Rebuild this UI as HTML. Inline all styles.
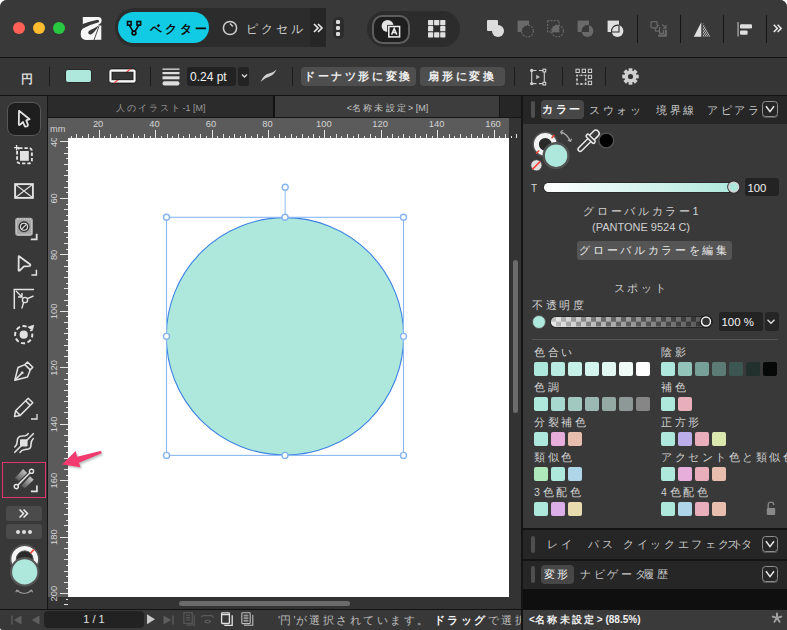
<!DOCTYPE html>
<html><head><meta charset="utf-8"><style>
html,body{margin:0;padding:0;background:#fff;}
body{width:787px;height:630px;overflow:hidden;position:relative;font-family:"Liberation Sans",sans-serif;}
#w{position:absolute;left:0;top:0;width:787px;height:630px;overflow:hidden;background:#383838;border-radius:7px 7px 0 3px;}
.t{position:absolute;white-space:nowrap;}
.j{letter-spacing:0.24em;}
svg{overflow:visible;}
</style></head><body><div id="w">
<div style="position:absolute;left:0px;top:0px;width:787px;height:57px;background:#393939"></div>
<div style="position:absolute;left:0px;top:57px;width:787px;height:1px;background:#141414"></div>
<div style="position:absolute;left:13px;top:22px;width:12px;height:12px;background:#fe5f57;border-radius:50%"></div>
<div style="position:absolute;left:33px;top:22px;width:12px;height:12px;background:#febc2e;border-radius:50%"></div>
<div style="position:absolute;left:53px;top:22px;width:12px;height:12px;background:#28c840;border-radius:50%"></div>
<svg style="position:absolute;left:76px;top:12px" width="30" height="32" viewBox="0 0 30 32">
<path fill="#f6f6f6" d="M6.8 5.1 L22 5.1 Q25.9 5.3 25.6 9 L25.3 12.5 L25.3 27.7 L10 28 Q4.8 27.5 4.7 22.3 Q4.7 18 7.2 16 L6.8 15.6 Z"/>
<path fill="#393939" d="M6.8 11.9 Q13 9.5 20.5 7.9 Q23.2 7.5 23.2 9.4 Q23 10.2 22 10.6 Q14 12.8 7.4 16.2 L6.3 16.5 L6.3 11.9 Z"/>
<path fill="#393939" d="M22.2 13.1 Q24.8 11.6 25.7 9.5 L26 13.4 L23.2 13.6 Z"/>
<path fill="#393939" d="M13.9 18.2 Q12 19.2 12.2 21.1 Q12.6 23 15 22.4 Q18.5 21 22.8 13.6 Q18 16.8 13.9 18.2 Z"/>
<path stroke="#393939" stroke-width="0.9" fill="none" d="M23 14.2 L18 28"/>
</svg>
<div style="position:absolute;left:115px;top:8px;width:211px;height:39px;background:#2c2c2c;border-radius:20px 0 0 20px"></div>
<div style="position:absolute;left:310px;top:8px;width:16px;height:39px;background:#262626"></div>
<div style="position:absolute;left:118px;top:12px;width:91px;height:31px;background:#10cbe3;border-radius:16px"></div>
<svg style="position:absolute;left:125px;top:19px" width="18" height="18" viewBox="0 0 18 18">
<g fill="none" stroke="#0a0a0a" stroke-width="1.6">
<rect x="2.5" y="2.5" width="3.6" height="3.6"/><rect x="12" y="2.5" width="3.6" height="3.6"/>
<circle cx="9" cy="14" r="1.9"/>
<path d="M4.3 6.1 L8 12.3 M13.8 6.1 L10 12.3"/></g></svg>
<div class="t" style="left:150px;top:23px;font-size:12px;line-height:12px;color:#0b0b0b;text-align:left;font-weight:bold"><span class="j">ベクター</span></div>
<svg style="position:absolute;left:222px;top:20px" width="16" height="16" viewBox="0 0 16 16"><circle cx="8" cy="8" r="6.6" fill="none" stroke="#cfcfcf" stroke-width="1.5"/><path d="M8 3.5 L10.8 6.4" stroke="#cfcfcf" stroke-width="1.4" fill="none"/></svg>
<div class="t" style="left:246px;top:23px;font-size:12px;line-height:12px;color:#cfcfcf;text-align:left;"><span class="j">ピクセル</span></div>
<svg style="position:absolute;left:312px;top:20px" width="12" height="16" viewBox="0 0 12 16"><path d="M2 4 L6 8 L2 12 M6 4 L10 8 L6 12" fill="none" stroke="#e8e8e8" stroke-width="1.6"/></svg>
<div style="position:absolute;left:333px;top:17px;width:10.5px;height:21.5px;background:#2c2c2c;border-radius:5px"></div>
<div style="position:absolute;left:336px;top:19.799999999999997px;width:4.2px;height:4.2px;background:#dcdcdc;border-radius:1.3px"></div>
<div style="position:absolute;left:336px;top:25.799999999999997px;width:4.2px;height:4.2px;background:#dcdcdc;border-radius:1.3px"></div>
<div style="position:absolute;left:336px;top:31.799999999999997px;width:4.2px;height:4.2px;background:#dcdcdc;border-radius:1.3px"></div>
<div style="position:absolute;left:367px;top:11px;width:93px;height:36px;background:#2c2c2c;border-radius:18px"></div>
<div style="position:absolute;left:372px;top:14.5px;width:38px;height:29px;background:#1e1e1e;border:2px solid #5e5e5e;border-radius:10.5px;box-sizing:border-box"></div>
<svg style="position:absolute;left:380px;top:18px" width="22" height="22" viewBox="0 0 22 22">
<circle cx="7.6" cy="8" r="6" fill="#e4e4e4"/>
<rect x="7.2" y="6.9" width="14" height="13.4" fill="#1e1e1e" />
<rect x="8.8" y="8.5" width="10.8" height="10.4" fill="none" stroke="#f0f0f0" stroke-width="1.5"/>
<path d="M11.6 16.6 L14.2 10.6 L16.8 16.6 M12.6 14.5 L15.8 14.5" stroke="#f0f0f0" stroke-width="1.5" fill="none"/></svg>
<svg style="position:absolute;left:428px;top:19.8px" width="18" height="18" viewBox="0 0 18 18"><rect x="0.0" y="0.0" width="5.2" height="5.2" rx="0.6" fill="#e0e0e0"/><rect x="6.1" y="0.0" width="5.2" height="5.2" rx="0.6" fill="#e0e0e0"/><rect x="12.2" y="0.0" width="5.2" height="5.2" rx="0.6" fill="#e0e0e0"/><rect x="0.0" y="6.1" width="5.2" height="5.2" rx="0.6" fill="#e0e0e0"/><rect x="12.2" y="6.1" width="5.2" height="5.2" rx="0.6" fill="#e0e0e0"/><rect x="0.0" y="12.2" width="5.2" height="5.2" rx="0.6" fill="#e0e0e0"/><rect x="6.1" y="12.2" width="5.2" height="5.2" rx="0.6" fill="#e0e0e0"/><rect x="12.2" y="12.2" width="5.2" height="5.2" rx="0.6" fill="#e0e0e0"/></svg>
<svg style="position:absolute;left:487px;top:20px" width="18" height="18" viewBox="0 0 18 18"><rect x="0" y="0" width="11" height="11" rx="1" fill="#dcdcdc"/><circle cx="11" cy="11" r="6" fill="#dcdcdc"/></svg>
<svg style="position:absolute;left:517px;top:20px" width="18" height="18" viewBox="0 0 18 18"><path d="M0.6 0.6 L12 0.6 L12 12 L0.6 12 Z" fill="#6a6a6a"/><circle cx="10.5" cy="11" r="5.9" fill="#393939"/><circle cx="10.5" cy="11" r="5.9" fill="none" stroke="#6a6a6a" stroke-width="1.2" stroke-dasharray="1.8 1.3"/></svg>
<svg style="position:absolute;left:547px;top:20px" width="18" height="18" viewBox="0 0 18 18"><defs><clipPath id="cq3"><path d="M0.6 0.6 L12 0.6 L12 12 L0.6 12 Z"/></clipPath></defs><circle cx="10.5" cy="11" r="5.9" fill="#6a6a6a" clip-path="url(#cq3)"/><path d="M0.6 0.6 L12 0.6 L12 12 L0.6 12 Z" fill="none" stroke="#6a6a6a" stroke-width="1.2" stroke-dasharray="1.8 1.3"/><circle cx="10.5" cy="11" r="5.9" fill="none" stroke="#6a6a6a" stroke-width="1.2" stroke-dasharray="1.8 1.3"/></svg>
<svg style="position:absolute;left:577px;top:20px" width="18" height="18" viewBox="0 0 18 18"><defs><clipPath id="cq4"><path d="M0.6 0.6 L12 0.6 L12 12 L0.6 12 Z"/></clipPath></defs><path d="M0.6 0.6 L12 0.6 L12 12 L0.6 12 Z" fill="#6a6a6a"/><circle cx="10.5" cy="11" r="5.9" fill="#6a6a6a"/><circle cx="10.5" cy="11" r="5.9" fill="#393939" clip-path="url(#cq4)"/></svg>
<svg style="position:absolute;left:607px;top:20px" width="18" height="18" viewBox="0 0 18 18"><defs><clipPath id="cq5"><path d="M0.6 0.6 L12 0.6 L12 12 L0.6 12 Z"/></clipPath><clipPath id="cc5"><circle cx="10.5" cy="11" r="5.9"/></clipPath></defs><path d="M0.6 0.6 L12 0.6 L12 12 L0.6 12 Z" fill="#e0e0e0"/><circle cx="10.5" cy="11" r="5.9" fill="#e0e0e0"/><path d="M0.6 0.6 L12 0.6 L12 12 L0.6 12 Z" fill="none" stroke="#2a2a2a" stroke-width="1.1" clip-path="url(#cc5)"/><circle cx="10.5" cy="11" r="5.9" fill="none" stroke="#2a2a2a" stroke-width="1.1" clip-path="url(#cq5)"/></svg>
<div style="position:absolute;left:637px;top:15px;width:1.2px;height:28px;background:#151515"></div>
<div style="position:absolute;left:680px;top:15px;width:1.2px;height:28px;background:#151515"></div>
<div style="position:absolute;left:723px;top:15px;width:1.2px;height:28px;background:#151515"></div>
<div style="position:absolute;left:766px;top:15px;width:1.2px;height:28px;background:#151515"></div>
<svg style="position:absolute;left:650px;top:20px" width="18" height="18" viewBox="0 0 18 18"><g fill="none" stroke="#6a6a6a" stroke-width="1.2"><rect x="1" y="1.7" width="6.2" height="6.2" rx="1"/><path d="M5.2 7.9 L5.2 10.2 Q5.2 11.2 6.2 11.2 L9.6 11.2 L9.6 7 M7.2 5.5 L9.2 5.5"/><path d="M12.2 4.5 L16 8.2 M16 5 L16 8.2 L12.8 8.2" stroke-width="1.1"/></g><path d="M8.2 15.6 L15.8 15.6 L15.8 9.8" fill="none" stroke="#6a6a6a" stroke-width="2.2"/><path d="M9.6 11.2 L9.6 13.4 L13.4 13.4 L13.4 10" fill="none" stroke="#6a6a6a" stroke-width="1.2"/></svg>
<svg style="position:absolute;left:693px;top:20px" width="18" height="18" viewBox="0 0 18 18"><defs><clipPath id="cfl"><path d="M9.8 2.3 L17.6 16.7 L9.8 16.7 Z"/></clipPath></defs><path d="M8.3 2.3 L8.3 16.7 L0.8 16.7 Z" fill="#e0e0e0"/><g clip-path="url(#cfl)"><path d="M0.5 18 L12.5 0" stroke="#e0e0e0" stroke-width="0.85"/><path d="M2.6 18 L14.6 0" stroke="#e0e0e0" stroke-width="0.85"/><path d="M4.7 18 L16.7 0" stroke="#e0e0e0" stroke-width="0.85"/><path d="M6.8 18 L18.8 0" stroke="#e0e0e0" stroke-width="0.85"/><path d="M8.9 18 L20.9 0" stroke="#e0e0e0" stroke-width="0.85"/><path d="M11.0 18 L23.0 0" stroke="#e0e0e0" stroke-width="0.85"/><path d="M13.1 18 L25.1 0" stroke="#e0e0e0" stroke-width="0.85"/><path d="M15.2 18 L27.2 0" stroke="#e0e0e0" stroke-width="0.85"/><path d="M17.3 18 L29.3 0" stroke="#e0e0e0" stroke-width="0.85"/><path d="M19.4 18 L31.4 0" stroke="#e0e0e0" stroke-width="0.85"/></g></svg>
<svg style="position:absolute;left:736px;top:20px" width="18" height="18" viewBox="0 0 18 18"><rect x="1.5" y="2" width="1.1" height="14.5" fill="#bdbdbd"/><rect x="4" y="4.2" width="12" height="4.3" rx="1.2" fill="#e0e0e0"/><rect x="4" y="10.4" width="7.6" height="4.3" rx="1.2" fill="#e0e0e0"/></svg>
<svg style="position:absolute;left:772px;top:22px" width="12" height="13" viewBox="0 0 12 13"><path d="M1.8 2.8 L5.4 6.4 L1.8 10 M5.6 2.8 L9.2 6.4 L5.6 10" fill="none" stroke="#e8e8e8" stroke-width="1.5"/></svg>
<div style="position:absolute;left:0px;top:58px;width:787px;height:37px;background:#363636"></div>
<div style="position:absolute;left:0px;top:95px;width:787px;height:1px;background:#141414"></div>
<div class="t" style="left:20.5px;top:73px;font-size:12px;line-height:12px;color:#d8d8d8;text-align:left;font-weight:bold"><span class="j">円</span></div>
<div style="position:absolute;left:49px;top:67px;width:1px;height:19px;background:#1c1c1c"></div>
<div style="position:absolute;left:150px;top:67px;width:1px;height:19px;background:#1c1c1c"></div>
<div style="position:absolute;left:292px;top:67px;width:1px;height:19px;background:#1c1c1c"></div>
<div style="position:absolute;left:514px;top:67px;width:1px;height:19px;background:#1c1c1c"></div>
<div style="position:absolute;left:562px;top:67px;width:1px;height:19px;background:#1c1c1c"></div>
<div style="position:absolute;left:605px;top:67px;width:1px;height:19px;background:#1c1c1c"></div>
<div style="position:absolute;left:65px;top:69px;width:27px;height:14px;background:#aee8dc;border:1px solid #262626;border-radius:3px;box-sizing:border-box"></div>
<svg style="position:absolute;left:108px;top:68px" width="29" height="16" viewBox="0 0 29 16"><rect x="0.9" y="0.9" width="27.2" height="14.2" rx="2.5" fill="#fafafa" stroke="#151515" stroke-width="0.9"/><path d="M6.3 15 L22.3 1" stroke="#ff4b4b" stroke-width="1.3"/><rect x="4" y="4.2" width="21" height="7.5" fill="#363636" stroke="#151515" stroke-width="0.9"/></svg>
<svg style="position:absolute;left:162px;top:68px" width="18" height="18" viewBox="0 0 18 18"><rect x="0.5" y="0.5" width="17" height="1.3" fill="#dedede"/><rect x="0.5" y="4" width="17" height="2.2" fill="#dedede"/><rect x="0.5" y="8.3" width="17" height="3" fill="#dedede"/><rect x="0.5" y="13.3" width="17" height="4.2" rx="2" fill="#dedede"/></svg>
<div style="position:absolute;left:187px;top:67px;width:49px;height:19px;background:#222;border-radius:3px"></div>
<div style="position:absolute;left:238px;top:67px;width:11px;height:19px;background:#232323;border-radius:3px"></div>
<div class="t" style="left:190px;top:71px;font-size:12px;line-height:12px;color:#f2f2f2;text-align:left;">0.24 pt</div>
<svg style="position:absolute;left:239.5px;top:72px" width="9" height="8" viewBox="0 0 9 8"><path d="M2 2.5 L4.5 5 L7 2.5" fill="none" stroke="#dcdcdc" stroke-width="1.3"/></svg>
<svg style="position:absolute;left:260px;top:69px" width="17" height="14" viewBox="0 0 17 14"><path d="M0.5 13 Q4 5 9 4.5 Q13 4 16.5 0.5 Q14 6 9.5 7.5 Q5 8.5 0.5 13 Z" fill="#cfcfcf"/></svg>
<div style="position:absolute;left:301px;top:67px;width:115px;height:19px;background:#4e4e4e;border-radius:4px"></div>
<div class="t" style="left:301px;top:71px;font-size:11px;line-height:11px;color:#eeeeee;width:115px;text-align:center;font-weight:bold"><span class="j">ドーナツ形に変換</span></div>
<div style="position:absolute;left:420px;top:67px;width:85px;height:19px;background:#4e4e4e;border-radius:4px"></div>
<div class="t" style="left:420px;top:71px;font-size:11px;line-height:11px;color:#eeeeee;width:85px;text-align:center;font-weight:bold"><span class="j">扇形に変換</span></div>
<svg style="position:absolute;left:529px;top:68px" width="18" height="18" viewBox="0 0 18 18"><g fill="none" stroke="#d0d0d0" stroke-width="1.1"><path d="M2.7 2.5 L2.7 15.6 M15.3 4 L15.3 14.2 M2.7 2.5 L7.5 2.5 M10 2.5 L14 2.5 M2.7 15.6 L7.5 15.6 M10 15.6 L14 15.6"/><rect x="14" y="1.2" width="2.7" height="2.7"/><rect x="14" y="14.3" width="2.7" height="2.7"/></g><circle cx="2.7" cy="2.5" r="1.7" fill="#d0d0d0"/><circle cx="2.7" cy="15.6" r="1.7" fill="#d0d0d0"/><path d="M7.2 6.8 L11 9 L7.2 11.3 Z" fill="#bdbdbd"/></svg>
<svg style="position:absolute;left:575px;top:68px" width="18" height="18" viewBox="0 0 18 18"><rect x="1" y="1.2" width="3.3" height="3.3" fill="none" stroke="#d0d0d0" stroke-width="1"/><rect x="7.2" y="1.2" width="3.3" height="3.3" fill="none" stroke="#d0d0d0" stroke-width="1"/><rect x="13.3" y="1.2" width="3.3" height="3.3" fill="none" stroke="#d0d0d0" stroke-width="1"/><rect x="13.3" y="7.3" width="3.3" height="3.3" fill="none" stroke="#d0d0d0" stroke-width="1"/><rect x="13.3" y="13.3" width="3.3" height="3.3" fill="none" stroke="#d0d0d0" stroke-width="1"/><rect x="2" y="7.3" width="8.7" height="8.7" fill="none" stroke="#d0d0d0" stroke-width="0.9" stroke-dasharray="1.2 1"/><circle cx="2" cy="7.3" r="0.9" fill="#d0d0d0"/><circle cx="6.35" cy="7.3" r="0.9" fill="#d0d0d0"/><circle cx="10.7" cy="7.3" r="0.9" fill="#d0d0d0"/><circle cx="2" cy="11.65" r="0.9" fill="#d0d0d0"/><circle cx="10.7" cy="11.65" r="0.9" fill="#d0d0d0"/><circle cx="2" cy="16" r="0.9" fill="#d0d0d0"/><circle cx="6.35" cy="16" r="0.9" fill="#d0d0d0"/><circle cx="10.7" cy="16" r="0.9" fill="#d0d0d0"/></svg>
<svg style="position:absolute;left:622px;top:68px" width="17" height="17" viewBox="0 0 17 17"><g transform="translate(8.5,8.5)"><rect x="-1.9" y="-8.2" width="3.8" height="4" transform="rotate(0)" fill="#d0d0d0"/><rect x="-1.9" y="-8.2" width="3.8" height="4" transform="rotate(45)" fill="#d0d0d0"/><rect x="-1.9" y="-8.2" width="3.8" height="4" transform="rotate(90)" fill="#d0d0d0"/><rect x="-1.9" y="-8.2" width="3.8" height="4" transform="rotate(135)" fill="#d0d0d0"/><rect x="-1.9" y="-8.2" width="3.8" height="4" transform="rotate(180)" fill="#d0d0d0"/><rect x="-1.9" y="-8.2" width="3.8" height="4" transform="rotate(225)" fill="#d0d0d0"/><rect x="-1.9" y="-8.2" width="3.8" height="4" transform="rotate(270)" fill="#d0d0d0"/><rect x="-1.9" y="-8.2" width="3.8" height="4" transform="rotate(315)" fill="#d0d0d0"/><circle r="6" fill="#d0d0d0"/><circle r="2.6" fill="#363636"/></g></svg>
<div style="position:absolute;left:0px;top:96px;width:47px;height:513px;background:#383838"></div>
<div style="position:absolute;left:47px;top:96px;width:1px;height:513px;background:#161616"></div>
<div style="position:absolute;left:7px;top:102px;width:34px;height:34px;background:#1e1e1e;border:1.5px solid #585858;border-radius:8px;box-sizing:border-box"></div>
<svg style="position:absolute;left:15px;top:109px" width="18" height="20" viewBox="0 0 18 20"><path d="M4 1.8 L14.6 10.2 L11.3 11.4 L12.9 15.6 Q13.2 16.9 11.8 17.3 L11 17.5 Q9.9 17.7 9.5 16.6 L8 13 L5.2 15.6 Q3.8 16.6 3.8 15 Z" fill="#1e1e1e" stroke="#e2e2e2" stroke-width="1.8" stroke-linejoin="round"/></svg>
<svg style="position:absolute;left:13px;top:145px" width="22" height="21" viewBox="0 0 22 21"><rect x="4.1" y="3.1" width="14.8" height="15.3" rx="3" fill="none" stroke="#e2e2e2" stroke-width="1.9" stroke-dasharray="3.4 1.9" stroke-dashoffset="1"/><rect x="7" y="6" width="8.8" height="9.8" fill="#e2e2e2"/><path d="M1.1 2.6 L6.2 2.6 M3.6 0 L3.6 5.6" stroke="#e2e2e2" stroke-width="1.4"/></svg>
<svg style="position:absolute;left:13px;top:182px" width="22" height="18" viewBox="0 0 22 18"><rect x="2.1" y="2.1" width="17.8" height="13.8" fill="none" stroke="#e2e2e2" stroke-width="1.9"/><path d="M2.5 2.5 L19.5 15.5 M19.5 2.5 L2.5 15.5" stroke="#e2e2e2" stroke-width="1.1"/></svg>
<svg style="position:absolute;left:13px;top:217px" width="26" height="25" viewBox="0 0 26 25"><rect x="2.1" y="0.8" width="17.8" height="18.1" rx="2.8" fill="#a6a6a6"/><rect x="3.4" y="2.1" width="15.2" height="15.5" rx="1.8" fill="none" stroke="#ececec" stroke-width="0.9" stroke-dasharray="0.9 1.1"/><circle cx="11" cy="9.7" r="5.4" fill="#2c2c2c" stroke="#555" stroke-width="0.8" stroke-dasharray="0.8 0.8"/><circle cx="11" cy="9.7" r="3.5" fill="#2c2c2c" stroke="#e4e4e4" stroke-width="1.1"/><path d="M8.6 12.1 L13.4 7.3" stroke="#e4e4e4" stroke-width="1.1"/><path d="M17.8 22.4 L23.7 22.4 L23.7 16.8" fill="none" stroke="#e2e2e2" stroke-width="1.8"/></svg>
<svg style="position:absolute;left:15px;top:254px" width="24" height="24" viewBox="0 0 24 24"><path d="M3.7 2.1 L15.3 10.6 Q15.6 12 14 12.1 L9 12.3 L4.6 16.6 Q3.6 17.2 3.6 16 Z" fill="none" stroke="#e2e2e2" stroke-width="1.8" stroke-linejoin="round"/><path d="M21.4 15.8 L21.4 20.9 L16.4 20.9" fill="none" stroke="#e2e2e2" stroke-width="1.5"/></svg>
<svg style="position:absolute;left:13px;top:288px" width="22" height="22" viewBox="0 0 22 22"><path d="M1.3 21 L1.3 1.5 L21 1.5" fill="none" stroke="#e2e2e2" stroke-width="1.5"/><path d="M3 3 L9 9 M9 5 L9 9 L5 9" fill="none" stroke="#e2e2e2" stroke-width="1.4"/><circle cx="12" cy="12" r="2.6" fill="none" stroke="#e2e2e2" stroke-width="1.4"/><path d="M14.5 10.6 L20.5 8 M10.6 14.5 L8.8 20.5" stroke="#e2e2e2" stroke-width="1.4"/></svg>
<svg style="position:absolute;left:13px;top:324px" width="22" height="22" viewBox="0 0 22 22"><circle cx="10.7" cy="10.7" r="8.6" fill="none" stroke="#e2e2e2" stroke-width="2" stroke-dasharray="4.2 2.55" stroke-dashoffset="1.5"/><rect x="15" y="-0.5" width="7" height="6.5" fill="#383838"/><circle cx="10.7" cy="10.7" r="4.1" fill="#e2e2e2"/><path d="M14.9 3 L20.9 1.1 L19.4 6.4 Z" fill="#e2e2e2" stroke="#e2e2e2" stroke-width="0.6" stroke-linejoin="round"/></svg>
<svg style="position:absolute;left:13px;top:360px" width="22" height="23" viewBox="0 0 22 23"><g fill="none" stroke="#e2e2e2" stroke-width="1.5" stroke-linejoin="round"><path d="M14.5 2 L19.8 7.3 L17.2 9.9 L11.9 4.6 Z"/><path d="M11.9 4.6 L5 7.5 L1.8 20.2 L14.5 17 L17.2 9.9"/><path d="M2 20 L8.6 13.4"/></g><circle cx="9.2" cy="12.8" r="1.4" fill="#e2e2e2"/></svg>
<svg style="position:absolute;left:13px;top:396px" width="26" height="26" viewBox="0 0 26 26"><g fill="none" stroke="#e2e2e2" stroke-width="1.5" stroke-linejoin="round"><path d="M15.2 2.2 L19.8 6.8 L7.2 19.4 L1.5 20.5 L2.6 14.8 Z"/><path d="M12.6 4.8 L17.2 9.4 M2.6 14.8 L7.2 19.4"/></g><path d="M24 18 L24 23 L18 23" fill="none" stroke="#e2e2e2" stroke-width="1.3"/></svg>
<svg style="position:absolute;left:13px;top:432px" width="22" height="23" viewBox="0 0 22 23"><g fill="none" stroke="#e2e2e2" stroke-width="1.6" stroke-linecap="round"><path d="M1.8 20.3 L20.3 1.7"/><path d="M1.8 15 Q4.2 13 4.2 9.5 Q4.2 4.2 9 4 L12 3.8 Q14 3.5 15.2 1.6"/><path d="M7 20.3 Q8.5 17.8 12 17.5 L14.5 17.3 Q18 17 18 12.5 Q18 8.5 20.3 6.5"/></g><rect x="7" y="7.2" width="7.6" height="7.4" rx="1" fill="#e2e2e2"/></svg>
<div style="position:absolute;left:2px;top:462px;width:44px;height:36px;border:1.5px solid #e0336c;box-sizing:border-box"></div>
<svg style="position:absolute;left:13px;top:468px" width="26" height="26" viewBox="0 0 26 26"><defs><linearGradient id="gb" x1="0" y1="1" x2="1" y2="0"><stop offset="0" stop-color="#444"/><stop offset="1" stop-color="#d8d8d8"/></linearGradient></defs><path d="M1.9 10 L10.1 1.1 L14.1 4.9 L5.9 13.1 Z" fill="url(#gb)"/><path d="M8.1 18 L17 8.3 L20.7 11.7 L11.9 20.3 Z" fill="url(#gb)"/><path d="M3.3 18.6 L18.5 3.3" stroke="#e4e4e4" stroke-width="1.5"/><circle cx="3.3" cy="18.6" r="2.1" fill="#383838" stroke="#e4e4e4" stroke-width="1.4"/><circle cx="18.5" cy="3.3" r="2.1" fill="#383838" stroke="#e4e4e4" stroke-width="1.4"/><path d="M17.9 23.4 L23.9 23.4 L23.9 17.4" fill="none" stroke="#e4e4e4" stroke-width="1.7"/></svg>
<div style="position:absolute;left:6px;top:506px;width:36px;height:15px;background:#4b4b4b;border-radius:3px"></div>
<svg style="position:absolute;left:18px;top:508px" width="12" height="11" viewBox="0 0 12 11"><path d="M1.5 1.5 L5.5 5.5 L1.5 9.5 M5.5 1.5 L9.5 5.5 L5.5 9.5" fill="none" stroke="#eee" stroke-width="1.5"/></svg>
<div style="position:absolute;left:6px;top:524px;width:36px;height:15px;background:#4b4b4b;border-radius:3px"></div>
<div style="position:absolute;left:16px;top:529.5px;width:4px;height:4px;background:#e0e0e0;border-radius:50%"></div>
<div style="position:absolute;left:22px;top:529.5px;width:4px;height:4px;background:#e0e0e0;border-radius:50%"></div>
<div style="position:absolute;left:28px;top:529.5px;width:4px;height:4px;background:#e0e0e0;border-radius:50%"></div>
<svg style="position:absolute;left:6px;top:538px" width="38" height="62" viewBox="0 0 38 62">
<circle cx="18.7" cy="21.3" r="14.3" fill="#2a2a2a" stroke="#555" stroke-width="1.5"/>
<circle cx="18.7" cy="21.3" r="11" fill="none" stroke="#f4f4f4" stroke-width="4.8"/>
<circle cx="18.7" cy="21.3" r="8.4" fill="none" stroke="#555" stroke-width="1"/>
<path d="M24.6 15.2 L27.8 11.4" stroke="#ff3b30" stroke-width="1.6"/>
<circle cx="18.7" cy="33.9" r="13.7" fill="#aee8dc" stroke="#555" stroke-width="2.2"/>
<path d="M10.8 52.5 Q18.2 58.5 25.6 52.5 M9.8 54.2 L10.8 52.2 L13 53 M26.6 54.2 L25.6 52.2 L23.4 53" fill="none" stroke="#9a9a9a" stroke-width="1.2"/>
</svg>
<div style="position:absolute;left:48px;top:96px;width:473px;height:21px;background:#262626"></div>
<div style="position:absolute;left:48px;top:96px;width:225px;height:21px;background:#2b2b2b"></div>
<div style="position:absolute;left:273px;top:96px;width:1.5px;height:21px;background:#121212"></div>
<div style="position:absolute;left:275px;top:96px;width:225px;height:21px;background:#3d3d3d"></div>
<div style="position:absolute;left:499px;top:96px;width:1.2px;height:21px;background:#161616"></div>
<div style="position:absolute;left:48px;top:117px;width:473px;height:1px;background:#141414"></div>
<div class="t" style="left:48px;top:103.5px;font-size:9px;line-height:9px;color:#9a9a9a;width:225px;text-align:center;"><span class="j">人のイラスト</span>-1 [M]</div>
<div class="t" style="left:275px;top:103.5px;font-size:9px;line-height:9px;color:#c4c4c4;width:225px;text-align:center;">&lt;<span class="j">名称未設定</span>&gt; [M]</div>
<div style="position:absolute;left:48px;top:118px;width:461px;height:20px;background:#5b5b5b"></div>
<div style="position:absolute;left:48px;top:138px;width:20px;height:459px;background:#5b5b5b"></div>
<div style="position:absolute;left:509px;top:118px;width:12px;height:491px;background:#333333"></div>
<div style="position:absolute;left:48px;top:597px;width:461px;height:12px;background:#333333"></div>
<div style="position:absolute;left:521px;top:96px;width:2px;height:513px;background:#141414"></div>
<div style="position:absolute;left:68px;top:138px;width:441px;height:459px;background:#ffffff"></div>
<svg style="position:absolute;left:0;top:0" width="787" height="630"><rect x="71" y="136" width="1" height="2" fill="#e6e6e6"/><rect x="76" y="134" width="1" height="4" fill="#e6e6e6"/><rect x="82" y="136" width="1" height="2" fill="#e6e6e6"/><rect x="88" y="134" width="1" height="4" fill="#e6e6e6"/><rect x="93" y="136" width="1" height="2" fill="#e6e6e6"/><rect x="99" y="130" width="1" height="8" fill="#e6e6e6"/><text x="98.1" y="127.2" font-size="9.4" fill="#d4d4d4" text-anchor="middle" font-family="Liberation Sans">20</text><rect x="104" y="136" width="1" height="2" fill="#e6e6e6"/><rect x="110" y="134" width="1" height="4" fill="#e6e6e6"/><rect x="116" y="136" width="1" height="2" fill="#e6e6e6"/><rect x="121" y="134" width="1" height="4" fill="#e6e6e6"/><rect x="127" y="136" width="1" height="2" fill="#e6e6e6"/><rect x="133" y="134" width="1" height="4" fill="#e6e6e6"/><rect x="138" y="136" width="1" height="2" fill="#e6e6e6"/><rect x="144" y="134" width="1" height="4" fill="#e6e6e6"/><rect x="150" y="136" width="1" height="2" fill="#e6e6e6"/><rect x="155" y="130" width="1" height="8" fill="#e6e6e6"/><text x="154.5" y="127.2" font-size="9.4" fill="#d4d4d4" text-anchor="middle" font-family="Liberation Sans">40</text><rect x="161" y="136" width="1" height="2" fill="#e6e6e6"/><rect x="167" y="134" width="1" height="4" fill="#e6e6e6"/><rect x="172" y="136" width="1" height="2" fill="#e6e6e6"/><rect x="178" y="134" width="1" height="4" fill="#e6e6e6"/><rect x="183" y="136" width="1" height="2" fill="#e6e6e6"/><rect x="189" y="134" width="1" height="4" fill="#e6e6e6"/><rect x="195" y="136" width="1" height="2" fill="#e6e6e6"/><rect x="200" y="134" width="1" height="4" fill="#e6e6e6"/><rect x="206" y="136" width="1" height="2" fill="#e6e6e6"/><rect x="212" y="130" width="1" height="8" fill="#e6e6e6"/><text x="210.9" y="127.2" font-size="9.4" fill="#d4d4d4" text-anchor="middle" font-family="Liberation Sans">60</text><rect x="217" y="136" width="1" height="2" fill="#e6e6e6"/><rect x="223" y="134" width="1" height="4" fill="#e6e6e6"/><rect x="229" y="136" width="1" height="2" fill="#e6e6e6"/><rect x="234" y="134" width="1" height="4" fill="#e6e6e6"/><rect x="240" y="136" width="1" height="2" fill="#e6e6e6"/><rect x="245" y="134" width="1" height="4" fill="#e6e6e6"/><rect x="251" y="136" width="1" height="2" fill="#e6e6e6"/><rect x="257" y="134" width="1" height="4" fill="#e6e6e6"/><rect x="262" y="136" width="1" height="2" fill="#e6e6e6"/><rect x="268" y="130" width="1" height="8" fill="#e6e6e6"/><text x="267.4" y="127.2" font-size="9.4" fill="#d4d4d4" text-anchor="middle" font-family="Liberation Sans">80</text><rect x="274" y="136" width="1" height="2" fill="#e6e6e6"/><rect x="279" y="134" width="1" height="4" fill="#e6e6e6"/><rect x="285" y="136" width="1" height="2" fill="#e6e6e6"/><rect x="291" y="134" width="1" height="4" fill="#e6e6e6"/><rect x="296" y="136" width="1" height="2" fill="#e6e6e6"/><rect x="302" y="134" width="1" height="4" fill="#e6e6e6"/><rect x="308" y="136" width="1" height="2" fill="#e6e6e6"/><rect x="313" y="134" width="1" height="4" fill="#e6e6e6"/><rect x="319" y="136" width="1" height="2" fill="#e6e6e6"/><rect x="324" y="130" width="1" height="8" fill="#e6e6e6"/><text x="323.8" y="127.2" font-size="9.4" fill="#d4d4d4" text-anchor="middle" font-family="Liberation Sans">100</text><rect x="330" y="136" width="1" height="2" fill="#e6e6e6"/><rect x="336" y="134" width="1" height="4" fill="#e6e6e6"/><rect x="341" y="136" width="1" height="2" fill="#e6e6e6"/><rect x="347" y="134" width="1" height="4" fill="#e6e6e6"/><rect x="353" y="136" width="1" height="2" fill="#e6e6e6"/><rect x="358" y="134" width="1" height="4" fill="#e6e6e6"/><rect x="364" y="136" width="1" height="2" fill="#e6e6e6"/><rect x="370" y="134" width="1" height="4" fill="#e6e6e6"/><rect x="375" y="136" width="1" height="2" fill="#e6e6e6"/><rect x="381" y="130" width="1" height="8" fill="#e6e6e6"/><text x="380.2" y="127.2" font-size="9.4" fill="#d4d4d4" text-anchor="middle" font-family="Liberation Sans">120</text><rect x="387" y="136" width="1" height="2" fill="#e6e6e6"/><rect x="392" y="134" width="1" height="4" fill="#e6e6e6"/><rect x="398" y="136" width="1" height="2" fill="#e6e6e6"/><rect x="403" y="134" width="1" height="4" fill="#e6e6e6"/><rect x="409" y="136" width="1" height="2" fill="#e6e6e6"/><rect x="415" y="134" width="1" height="4" fill="#e6e6e6"/><rect x="420" y="136" width="1" height="2" fill="#e6e6e6"/><rect x="426" y="134" width="1" height="4" fill="#e6e6e6"/><rect x="432" y="136" width="1" height="2" fill="#e6e6e6"/><rect x="437" y="130" width="1" height="8" fill="#e6e6e6"/><text x="436.6" y="127.2" font-size="9.4" fill="#d4d4d4" text-anchor="middle" font-family="Liberation Sans">140</text><rect x="443" y="136" width="1" height="2" fill="#e6e6e6"/><rect x="449" y="134" width="1" height="4" fill="#e6e6e6"/><rect x="454" y="136" width="1" height="2" fill="#e6e6e6"/><rect x="460" y="134" width="1" height="4" fill="#e6e6e6"/><rect x="466" y="136" width="1" height="2" fill="#e6e6e6"/><rect x="471" y="134" width="1" height="4" fill="#e6e6e6"/><rect x="477" y="136" width="1" height="2" fill="#e6e6e6"/><rect x="482" y="134" width="1" height="4" fill="#e6e6e6"/><rect x="488" y="136" width="1" height="2" fill="#e6e6e6"/><rect x="494" y="130" width="1" height="8" fill="#e6e6e6"/><text x="493.0" y="127.2" font-size="9.4" fill="#d4d4d4" text-anchor="middle" font-family="Liberation Sans">160</text><rect x="499" y="136" width="1" height="2" fill="#e6e6e6"/><rect x="505" y="134" width="1" height="4" fill="#e6e6e6"/><rect x="511" y="136" width="1" height="2" fill="#e6e6e6"/><rect x="516" y="134" width="1" height="4" fill="#e6e6e6"/><rect x="60" y="141" width="8" height="1" fill="#e6e6e6"/><text x="0" y="0" transform="translate(56.7,141.9) rotate(-90)" font-size="9.4" fill="#d4d4d4" text-anchor="middle" font-family="Liberation Sans">40</text><rect x="66" y="147" width="2" height="1" fill="#e6e6e6"/><rect x="64" y="153" width="4" height="1" fill="#e6e6e6"/><rect x="66" y="158" width="2" height="1" fill="#e6e6e6"/><rect x="64" y="164" width="4" height="1" fill="#e6e6e6"/><rect x="66" y="170" width="2" height="1" fill="#e6e6e6"/><rect x="64" y="175" width="4" height="1" fill="#e6e6e6"/><rect x="66" y="181" width="2" height="1" fill="#e6e6e6"/><rect x="64" y="187" width="4" height="1" fill="#e6e6e6"/><rect x="66" y="192" width="2" height="1" fill="#e6e6e6"/><rect x="60" y="198" width="8" height="1" fill="#e6e6e6"/><text x="0" y="0" transform="translate(56.7,198.4) rotate(-90)" font-size="9.4" fill="#d4d4d4" text-anchor="middle" font-family="Liberation Sans">60</text><rect x="66" y="204" width="2" height="1" fill="#e6e6e6"/><rect x="64" y="209" width="4" height="1" fill="#e6e6e6"/><rect x="66" y="215" width="2" height="1" fill="#e6e6e6"/><rect x="64" y="220" width="4" height="1" fill="#e6e6e6"/><rect x="66" y="226" width="2" height="1" fill="#e6e6e6"/><rect x="64" y="232" width="4" height="1" fill="#e6e6e6"/><rect x="66" y="237" width="2" height="1" fill="#e6e6e6"/><rect x="64" y="243" width="4" height="1" fill="#e6e6e6"/><rect x="66" y="249" width="2" height="1" fill="#e6e6e6"/><rect x="60" y="254" width="8" height="1" fill="#e6e6e6"/><text x="0" y="0" transform="translate(56.7,254.9) rotate(-90)" font-size="9.4" fill="#d4d4d4" text-anchor="middle" font-family="Liberation Sans">80</text><rect x="66" y="260" width="2" height="1" fill="#e6e6e6"/><rect x="64" y="266" width="4" height="1" fill="#e6e6e6"/><rect x="66" y="271" width="2" height="1" fill="#e6e6e6"/><rect x="64" y="277" width="4" height="1" fill="#e6e6e6"/><rect x="66" y="283" width="2" height="1" fill="#e6e6e6"/><rect x="64" y="288" width="4" height="1" fill="#e6e6e6"/><rect x="66" y="294" width="2" height="1" fill="#e6e6e6"/><rect x="64" y="300" width="4" height="1" fill="#e6e6e6"/><rect x="66" y="305" width="2" height="1" fill="#e6e6e6"/><rect x="60" y="311" width="8" height="1" fill="#e6e6e6"/><text x="0" y="0" transform="translate(56.7,311.3) rotate(-90)" font-size="9.4" fill="#d4d4d4" text-anchor="middle" font-family="Liberation Sans">100</text><rect x="66" y="316" width="2" height="1" fill="#e6e6e6"/><rect x="64" y="322" width="4" height="1" fill="#e6e6e6"/><rect x="66" y="328" width="2" height="1" fill="#e6e6e6"/><rect x="64" y="333" width="4" height="1" fill="#e6e6e6"/><rect x="66" y="339" width="2" height="1" fill="#e6e6e6"/><rect x="64" y="345" width="4" height="1" fill="#e6e6e6"/><rect x="66" y="350" width="2" height="1" fill="#e6e6e6"/><rect x="64" y="356" width="4" height="1" fill="#e6e6e6"/><rect x="66" y="362" width="2" height="1" fill="#e6e6e6"/><rect x="60" y="367" width="8" height="1" fill="#e6e6e6"/><text x="0" y="0" transform="translate(56.7,367.8) rotate(-90)" font-size="9.4" fill="#d4d4d4" text-anchor="middle" font-family="Liberation Sans">120</text><rect x="66" y="373" width="2" height="1" fill="#e6e6e6"/><rect x="64" y="379" width="4" height="1" fill="#e6e6e6"/><rect x="66" y="384" width="2" height="1" fill="#e6e6e6"/><rect x="64" y="390" width="4" height="1" fill="#e6e6e6"/><rect x="66" y="396" width="2" height="1" fill="#e6e6e6"/><rect x="64" y="401" width="4" height="1" fill="#e6e6e6"/><rect x="66" y="407" width="2" height="1" fill="#e6e6e6"/><rect x="64" y="412" width="4" height="1" fill="#e6e6e6"/><rect x="66" y="418" width="2" height="1" fill="#e6e6e6"/><rect x="60" y="424" width="8" height="1" fill="#e6e6e6"/><text x="0" y="0" transform="translate(56.7,424.3) rotate(-90)" font-size="9.4" fill="#d4d4d4" text-anchor="middle" font-family="Liberation Sans">140</text><rect x="66" y="429" width="2" height="1" fill="#e6e6e6"/><rect x="64" y="435" width="4" height="1" fill="#e6e6e6"/><rect x="66" y="441" width="2" height="1" fill="#e6e6e6"/><rect x="64" y="446" width="4" height="1" fill="#e6e6e6"/><rect x="66" y="452" width="2" height="1" fill="#e6e6e6"/><rect x="64" y="458" width="4" height="1" fill="#e6e6e6"/><rect x="66" y="463" width="2" height="1" fill="#e6e6e6"/><rect x="64" y="469" width="4" height="1" fill="#e6e6e6"/><rect x="66" y="475" width="2" height="1" fill="#e6e6e6"/><rect x="60" y="480" width="8" height="1" fill="#e6e6e6"/><text x="0" y="0" transform="translate(56.7,480.7) rotate(-90)" font-size="9.4" fill="#d4d4d4" text-anchor="middle" font-family="Liberation Sans">160</text><rect x="66" y="486" width="2" height="1" fill="#e6e6e6"/><rect x="64" y="492" width="4" height="1" fill="#e6e6e6"/><rect x="66" y="497" width="2" height="1" fill="#e6e6e6"/><rect x="64" y="503" width="4" height="1" fill="#e6e6e6"/><rect x="66" y="508" width="2" height="1" fill="#e6e6e6"/><rect x="64" y="514" width="4" height="1" fill="#e6e6e6"/><rect x="66" y="520" width="2" height="1" fill="#e6e6e6"/><rect x="64" y="525" width="4" height="1" fill="#e6e6e6"/><rect x="66" y="531" width="2" height="1" fill="#e6e6e6"/><rect x="60" y="537" width="8" height="1" fill="#e6e6e6"/><text x="0" y="0" transform="translate(56.7,537.2) rotate(-90)" font-size="9.4" fill="#d4d4d4" text-anchor="middle" font-family="Liberation Sans">180</text><rect x="66" y="542" width="2" height="1" fill="#e6e6e6"/><rect x="64" y="548" width="4" height="1" fill="#e6e6e6"/><rect x="66" y="554" width="2" height="1" fill="#e6e6e6"/><rect x="64" y="559" width="4" height="1" fill="#e6e6e6"/><rect x="66" y="565" width="2" height="1" fill="#e6e6e6"/><rect x="64" y="571" width="4" height="1" fill="#e6e6e6"/><rect x="66" y="576" width="2" height="1" fill="#e6e6e6"/><rect x="64" y="582" width="4" height="1" fill="#e6e6e6"/><rect x="66" y="588" width="2" height="1" fill="#e6e6e6"/><rect x="60" y="593" width="8" height="1" fill="#e6e6e6"/><text x="0" y="0" transform="translate(56.7,593.7) rotate(-90)" font-size="9.4" fill="#d4d4d4" text-anchor="middle" font-family="Liberation Sans">200</text><rect x="66" y="599" width="2" height="1" fill="#e6e6e6"/><rect x="64" y="604" width="4" height="1" fill="#e6e6e6"/></svg>
<div style="position:absolute;left:48px;top:118px;width:20px;height:20px;background:#5b5b5b"></div>
<div class="t" style="left:50px;top:125px;font-size:9.2px;line-height:9.2px;color:#d4d4d4;text-align:left;">mm</div>
<div style="position:absolute;left:513px;top:260px;width:5px;height:153px;background:#6b6b6b;border-radius:3px"></div>
<div style="position:absolute;left:179px;top:601px;width:171px;height:5px;background:#6b6b6b;border-radius:3px"></div>
<svg style="position:absolute;left:0;top:0" width="787" height="630">
<circle cx="285" cy="336.35" r="118.7" fill="#aee8dc" stroke="#3b82e2" stroke-width="1.1"/>
<rect x="166.5" y="217.3" width="237" height="238.1" fill="none" stroke="#8ab8f2" stroke-width="1.1"/>
<path d="M285.2 190.3 L285.2 214.3" stroke="#a8cbf6" stroke-width="1.3"/>
<circle cx="166.5" cy="217.3" r="3" fill="#fff" stroke="#86b4f0" stroke-width="1.4"/><circle cx="285" cy="217.3" r="3" fill="#fff" stroke="#86b4f0" stroke-width="1.4"/><circle cx="403.5" cy="217.3" r="3" fill="#fff" stroke="#86b4f0" stroke-width="1.4"/><circle cx="166.5" cy="336.35" r="3" fill="#fff" stroke="#86b4f0" stroke-width="1.4"/><circle cx="403.5" cy="336.35" r="3" fill="#fff" stroke="#86b4f0" stroke-width="1.4"/><circle cx="166.5" cy="455.4" r="3" fill="#fff" stroke="#86b4f0" stroke-width="1.4"/><circle cx="285" cy="455.4" r="3" fill="#fff" stroke="#86b4f0" stroke-width="1.4"/><circle cx="403.5" cy="455.4" r="3" fill="#fff" stroke="#86b4f0" stroke-width="1.4"/><circle cx="285.2" cy="187.3" r="3" fill="#fff" stroke="#86b4f0" stroke-width="1.4"/>
<defs><filter id="sh" x="-20%" y="-20%" width="140%" height="160%"><feGaussianBlur stdDeviation="1.2"/></filter></defs>
<path d="M62.2 464.4 L75.6 451.1 L77.2 456.7 L100.2 450.9 Q102.4 451.4 101.1 453.4 L78.9 462.8 L80.6 467.2 Z" fill="#2a4040" opacity="0.35" transform="translate(1.2,1.6)" filter="url(#sh)"/>
<path d="M62.2 464.4 L75.6 451.1 L77.2 456.7 L100.2 450.9 Q102.4 451.4 101.1 453.4 L78.9 462.8 L80.6 467.2 Z" fill="#f23a6e"/>
</svg>
<div style="position:absolute;left:523px;top:96px;width:264px;height:28px;background:#262626"></div>
<div style="position:absolute;left:523px;top:124px;width:264px;height:405px;background:#393939"></div>
<div style="position:absolute;left:523px;top:528px;width:264px;height:2px;background:#141414"></div>
<div style="position:absolute;left:523px;top:530px;width:264px;height:29px;background:#262626"></div>
<div style="position:absolute;left:523px;top:559px;width:264px;height:2px;background:#141414"></div>
<div style="position:absolute;left:523px;top:561px;width:264px;height:28px;background:#262626"></div>
<div style="position:absolute;left:523px;top:589px;width:264px;height:20px;background:#0f0f0f"></div>
<div style="position:absolute;left:531px;top:101px;width:4px;height:17px;background:#4f4f4f;border-radius:2px"></div>
<div style="position:absolute;left:541px;top:100px;width:43px;height:19px;background:#474747;border-radius:4px"></div>
<div class="t" style="left:541px;top:104px;font-size:11px;line-height:11px;color:#f4f4f4;width:43px;text-align:center;font-weight:bold"><span class="j">カラー</span></div>
<div class="t" style="left:589px;top:105px;font-size:11px;line-height:11px;color:#c8c8c8;text-align:left;"><span class="j">スウォッ</span></div>
<div class="t" style="left:656px;top:105px;font-size:11px;line-height:11px;color:#c8c8c8;text-align:left;"><span class="j">境界線</span></div>
<div class="t" style="left:707px;top:105px;font-size:11px;line-height:11px;color:#c8c8c8;text-align:left;"><span class="j">アピアラ</span></div>
<div style="position:absolute;left:762px;top:101px;width:16px;height:16px;border:1.3px solid #8e8e8e;border-radius:3.5px;box-shadow:0 1px 0 #555;box-sizing:border-box"></div>
<svg style="position:absolute;left:765px;top:105px" width="10" height="8" viewBox="0 0 10 8"><path d="M1 1.3 L5 6.6 L9 1.3" fill="none" stroke="#ececec" stroke-width="1.5"/></svg>
<svg style="position:absolute;left:525px;top:124px" width="100" height="50" viewBox="0 0 100 50">
<circle cx="20.3" cy="20.3" r="12" fill="#2a2a2a" stroke="#555" stroke-width="1.5"/>
<circle cx="20.3" cy="20.3" r="8.9" fill="none" stroke="#f4f4f4" stroke-width="5"/>
<path d="M26.5 14.2 L29.5 11 M14.2 26.5 L11.2 29.6" stroke="#ff3b30" stroke-width="1.5"/>
<circle cx="31.1" cy="31.7" r="12.4" fill="#aee8dc" stroke="#525252" stroke-width="2.4"/>
<circle cx="11.4" cy="41.3" r="5.6" fill="#dedede" stroke="#3a3a3a" stroke-width="0.8"/>
<path d="M7.6 45.1 L15.2 37.5" stroke="#ff3b30" stroke-width="1.5"/>
<path d="M35.5 7.8 Q42 9.5 45.5 17.5 M35.5 7.8 L38.2 6.2 M35.5 7.8 L37.2 10.4 M45.5 17.5 L42.8 16 M45.5 17.5 L46.6 14.6" fill="none" stroke="#a8a8a8" stroke-width="1.2"/>
<g transform="translate(73.2,7.2) rotate(45)" fill="none" stroke="#e8e8e8" stroke-width="1.5" stroke-linejoin="round">
<path d="M-3.3 9 L-3.3 3.3 Q-3.3 0 0 0 Q3.3 0 3.3 3.3 L3.3 9"/>
<rect x="-5.6" y="9" width="11.2" height="3.4" rx="1.5"/>
<path d="M-2.1 12.4 L-2.1 25.5 Q-2.1 27.6 0 27.6 Q2.1 27.6 2.1 25.5 L2.1 12.4"/>
</g>
<circle cx="81.3" cy="16.5" r="7.4" fill="#000" stroke="#555" stroke-width="1.4"/>
</svg>
<div class="t" style="left:531px;top:184px;font-size:10px;line-height:10px;color:#d8d8d8;text-align:left;">T</div>
<div style="position:absolute;left:544px;top:182.5px;width:192px;height:9.5px;background:linear-gradient(to right,#ffffff,#aee8dc);border-radius:5px;box-shadow:0 0 0 0.8px #262626"></div>
<svg style="position:absolute;left:725px;top:179px" width="18" height="18" viewBox="0 0 18 18"><circle cx="8.7" cy="8.1" r="6.5" fill="#2a2a2a"/><circle cx="8.7" cy="8.1" r="4.9" fill="#aee8dc" stroke="#d4d4d4" stroke-width="1.5"/></svg>
<div style="position:absolute;left:745px;top:178px;width:34px;height:18px;background:#232323;border-radius:3px"></div>
<div class="t" style="left:747.5px;top:182.5px;font-size:11.3px;line-height:11.3px;color:#f4f4f4;text-align:left;">100</div>
<div class="t" style="left:523px;top:206px;font-size:11px;line-height:11px;color:#d0d0d0;width:236px;text-align:center;"><span class="j">グローバルカラー</span>1</div>
<div class="t" style="left:523px;top:222px;font-size:11px;line-height:11px;color:#d0d0d0;width:236px;text-align:center;">(PANTONE 9524 C)</div>
<div style="position:absolute;left:577px;top:241px;width:155px;height:19px;background:#555555;border-radius:3px"></div>
<div class="t" style="left:577px;top:245px;font-size:11px;line-height:11px;color:#e8e8e8;width:155px;text-align:center;"><span class="j">グローバルカラーを編集</span></div>
<div class="t" style="left:523px;top:283px;font-size:11px;line-height:11px;color:#d0d0d0;width:236px;text-align:center;"><span class="j">スポット</span></div>
<div class="t" style="left:532px;top:300px;font-size:11px;line-height:11px;color:#d0d0d0;text-align:left;"><span class="j">不透明度</span></div>
<div style="position:absolute;left:532px;top:315px;width:14px;height:14px;border-radius:50%;background:#aee8dc;border:1px solid #555;box-sizing:border-box"></div>
<div style="position:absolute;left:551px;top:316.5px;width:161px;height:10px;border-radius:5px;overflow:hidden;background:#d0d0d0;box-shadow:0 0 0 1px #262626"><svg width="161" height="10" style="position:absolute;left:0;top:0.3px"><rect x="0" y="0.0" width="5" height="4.7" fill="#7a7a7a"/><rect x="5" y="4.7" width="5" height="4.7" fill="#7a7a7a"/><rect x="10" y="0.0" width="5" height="4.7" fill="#7a7a7a"/><rect x="15" y="4.7" width="5" height="4.7" fill="#7a7a7a"/><rect x="20" y="0.0" width="5" height="4.7" fill="#7a7a7a"/><rect x="25" y="4.7" width="5" height="4.7" fill="#7a7a7a"/><rect x="30" y="0.0" width="5" height="4.7" fill="#7a7a7a"/><rect x="35" y="4.7" width="5" height="4.7" fill="#7a7a7a"/><rect x="40" y="0.0" width="5" height="4.7" fill="#7a7a7a"/><rect x="45" y="4.7" width="5" height="4.7" fill="#7a7a7a"/><rect x="50" y="0.0" width="5" height="4.7" fill="#7a7a7a"/><rect x="55" y="4.7" width="5" height="4.7" fill="#7a7a7a"/><rect x="60" y="0.0" width="5" height="4.7" fill="#7a7a7a"/><rect x="65" y="4.7" width="5" height="4.7" fill="#7a7a7a"/><rect x="70" y="0.0" width="5" height="4.7" fill="#7a7a7a"/><rect x="75" y="4.7" width="5" height="4.7" fill="#7a7a7a"/><rect x="80" y="0.0" width="5" height="4.7" fill="#7a7a7a"/><rect x="85" y="4.7" width="5" height="4.7" fill="#7a7a7a"/><rect x="90" y="0.0" width="5" height="4.7" fill="#7a7a7a"/><rect x="95" y="4.7" width="5" height="4.7" fill="#7a7a7a"/><rect x="100" y="0.0" width="5" height="4.7" fill="#7a7a7a"/><rect x="105" y="4.7" width="5" height="4.7" fill="#7a7a7a"/><rect x="110" y="0.0" width="5" height="4.7" fill="#7a7a7a"/><rect x="115" y="4.7" width="5" height="4.7" fill="#7a7a7a"/><rect x="120" y="0.0" width="5" height="4.7" fill="#7a7a7a"/><rect x="125" y="4.7" width="5" height="4.7" fill="#7a7a7a"/><rect x="130" y="0.0" width="5" height="4.7" fill="#7a7a7a"/><rect x="135" y="4.7" width="5" height="4.7" fill="#7a7a7a"/><rect x="140" y="0.0" width="5" height="4.7" fill="#7a7a7a"/><rect x="145" y="4.7" width="5" height="4.7" fill="#7a7a7a"/><rect x="150" y="0.0" width="5" height="4.7" fill="#7a7a7a"/><rect x="155" y="4.7" width="5" height="4.7" fill="#7a7a7a"/><rect x="160" y="0.0" width="5" height="4.7" fill="#7a7a7a"/></svg><div style="position:absolute;left:0;top:0;width:161px;height:10px;background:linear-gradient(to right,rgba(255,255,255,0.55),rgba(0,0,0,0.12) 30%,rgba(0,0,0,0.62))"></div></div>
<svg style="position:absolute;left:698px;top:313px" width="16" height="16" viewBox="0 0 16 16"><circle cx="8" cy="8.5" r="6.2" fill="#111"/><circle cx="8" cy="8.5" r="4.5" fill="#333" stroke="#f4f4f4" stroke-width="1.5"/></svg>
<div style="position:absolute;left:719px;top:312px;width:44px;height:19px;background:#232323;border-radius:3px"></div>
<div style="position:absolute;left:765px;top:312px;width:14px;height:19px;background:#252525;border-radius:3px"></div>
<div class="t" style="left:721.5px;top:317px;font-size:11.4px;line-height:11.4px;color:#f4f4f4;text-align:left;">100 %</div>
<svg style="position:absolute;left:766px;top:318px" width="10" height="8" viewBox="0 0 10 8"><path d="M1.5 1.8 L5 5.3 L8.5 1.8" fill="none" stroke="#dcdcdc" stroke-width="1.4"/></svg>
<div style="position:absolute;left:532px;top:339px;width:246px;height:1px;background:#555"></div>
<div class="t" style="left:534px;top:347px;font-size:10.5px;line-height:10.5px;color:#d0d0d0;text-align:left;"><span class="j">色合い</span></div>
<div class="t" style="left:661px;top:347px;font-size:10.5px;line-height:10.5px;color:#d0d0d0;text-align:left;"><span class="j">陰影</span></div>
<div style="position:absolute;left:534px;top:362px;width:13.5px;height:13.5px;background:#aee8dc;border-radius:2px"></div>
<div style="position:absolute;left:551px;top:362px;width:13.5px;height:13.5px;background:#b8ece2;border-radius:2px"></div>
<div style="position:absolute;left:568px;top:362px;width:13.5px;height:13.5px;background:#c6efe7;border-radius:2px"></div>
<div style="position:absolute;left:585px;top:362px;width:13.5px;height:13.5px;background:#d3f3ed;border-radius:2px"></div>
<div style="position:absolute;left:602px;top:362px;width:13.5px;height:13.5px;background:#e1f7f2;border-radius:2px"></div>
<div style="position:absolute;left:619px;top:362px;width:13.5px;height:13.5px;background:#f0fbf8;border-radius:2px"></div>
<div style="position:absolute;left:636px;top:362px;width:13.5px;height:13.5px;background:#ffffff;border-radius:2px"></div>
<div style="position:absolute;left:661px;top:362px;width:13.5px;height:13.5px;background:#aee8dc;border-radius:2px"></div>
<div style="position:absolute;left:678px;top:362px;width:13.5px;height:13.5px;background:#92c4b9;border-radius:2px"></div>
<div style="position:absolute;left:695px;top:362px;width:13.5px;height:13.5px;background:#769f97;border-radius:2px"></div>
<div style="position:absolute;left:712px;top:362px;width:13.5px;height:13.5px;background:#5b7b74;border-radius:2px"></div>
<div style="position:absolute;left:729px;top:362px;width:13.5px;height:13.5px;background:#3e5651;border-radius:2px"></div>
<div style="position:absolute;left:746px;top:362px;width:13.5px;height:13.5px;background:#23312e;border-radius:2px"></div>
<div style="position:absolute;left:763px;top:362px;width:13.5px;height:13.5px;background:#070908;border-radius:2px"></div>
<div class="t" style="left:534px;top:382px;font-size:10.5px;line-height:10.5px;color:#d0d0d0;text-align:left;"><span class="j">色調</span></div>
<div class="t" style="left:661px;top:382px;font-size:10.5px;line-height:10.5px;color:#d0d0d0;text-align:left;"><span class="j">補色</span></div>
<div style="position:absolute;left:534px;top:397px;width:13.5px;height:13.5px;background:#aee8dc;border-radius:2px"></div>
<div style="position:absolute;left:551px;top:397px;width:13.5px;height:13.5px;background:#a7d9ce;border-radius:2px"></div>
<div style="position:absolute;left:568px;top:397px;width:13.5px;height:13.5px;background:#a1c9c0;border-radius:2px"></div>
<div style="position:absolute;left:585px;top:397px;width:13.5px;height:13.5px;background:#9bb9b2;border-radius:2px"></div>
<div style="position:absolute;left:602px;top:397px;width:13.5px;height:13.5px;background:#94a9a4;border-radius:2px"></div>
<div style="position:absolute;left:619px;top:397px;width:13.5px;height:13.5px;background:#8d9996;border-radius:2px"></div>
<div style="position:absolute;left:636px;top:397px;width:13.5px;height:13.5px;background:#868686;border-radius:2px"></div>
<div style="position:absolute;left:661px;top:397px;width:13.5px;height:13.5px;background:#aee8dc;border-radius:2px"></div>
<div style="position:absolute;left:678px;top:397px;width:13.5px;height:13.5px;background:#e8aebb;border-radius:2px"></div>
<div class="t" style="left:534px;top:417px;font-size:10.5px;line-height:10.5px;color:#d0d0d0;text-align:left;"><span class="j">分裂補色</span></div>
<div class="t" style="left:661px;top:417px;font-size:10.5px;line-height:10.5px;color:#d0d0d0;text-align:left;"><span class="j">正方形</span></div>
<div style="position:absolute;left:534px;top:432px;width:13.5px;height:13.5px;background:#aee8dc;border-radius:2px"></div>
<div style="position:absolute;left:551px;top:432px;width:13.5px;height:13.5px;background:#e8aedb;border-radius:2px"></div>
<div style="position:absolute;left:568px;top:432px;width:13.5px;height:13.5px;background:#e8bfae;border-radius:2px"></div>
<div style="position:absolute;left:661px;top:432px;width:13.5px;height:13.5px;background:#aee8dc;border-radius:2px"></div>
<div style="position:absolute;left:678px;top:432px;width:13.5px;height:13.5px;background:#bcaee8;border-radius:2px"></div>
<div style="position:absolute;left:695px;top:432px;width:13.5px;height:13.5px;background:#e8aebb;border-radius:2px"></div>
<div style="position:absolute;left:712px;top:432px;width:13.5px;height:13.5px;background:#dae8ae;border-radius:2px"></div>
<div class="t" style="left:534px;top:452px;font-size:10.5px;line-height:10.5px;color:#d0d0d0;text-align:left;"><span class="j">類似色</span></div>
<div class="t" style="left:661px;top:452px;font-size:10.5px;line-height:10.5px;color:#d0d0d0;text-align:left;"><span class="j">アクセント色と類似色</span></div>
<div style="position:absolute;left:534px;top:467px;width:13.5px;height:13.5px;background:#aee8bb;border-radius:2px"></div>
<div style="position:absolute;left:551px;top:467px;width:13.5px;height:13.5px;background:#aee8dc;border-radius:2px"></div>
<div style="position:absolute;left:568px;top:467px;width:13.5px;height:13.5px;background:#aed6e8;border-radius:2px"></div>
<div style="position:absolute;left:661px;top:467px;width:13.5px;height:13.5px;background:#aee8dc;border-radius:2px"></div>
<div style="position:absolute;left:678px;top:467px;width:13.5px;height:13.5px;background:#e8aedb;border-radius:2px"></div>
<div style="position:absolute;left:695px;top:467px;width:13.5px;height:13.5px;background:#e8aebb;border-radius:2px"></div>
<div style="position:absolute;left:712px;top:467px;width:13.5px;height:13.5px;background:#e8bfae;border-radius:2px"></div>
<div class="t" style="left:534px;top:487px;font-size:10.5px;line-height:10.5px;color:#d0d0d0;text-align:left;">3 <span class="j">色配色</span></div>
<div class="t" style="left:661px;top:487px;font-size:10.5px;line-height:10.5px;color:#d0d0d0;text-align:left;">4 <span class="j">色配色</span></div>
<div style="position:absolute;left:534px;top:502px;width:13.5px;height:13.5px;background:#aee8dc;border-radius:2px"></div>
<div style="position:absolute;left:551px;top:502px;width:13.5px;height:13.5px;background:#dcaee8;border-radius:2px"></div>
<div style="position:absolute;left:568px;top:502px;width:13.5px;height:13.5px;background:#e8dcae;border-radius:2px"></div>
<div style="position:absolute;left:661px;top:502px;width:13.5px;height:13.5px;background:#aee8dc;border-radius:2px"></div>
<div style="position:absolute;left:678px;top:502px;width:13.5px;height:13.5px;background:#aed6e8;border-radius:2px"></div>
<div style="position:absolute;left:695px;top:502px;width:13.5px;height:13.5px;background:#e8aebb;border-radius:2px"></div>
<div style="position:absolute;left:712px;top:502px;width:13.5px;height:13.5px;background:#e8bfae;border-radius:2px"></div>
<svg style="position:absolute;left:766px;top:501px" width="10" height="15" viewBox="0 0 10 15"><path d="M2.2 7 L2.2 4 Q2.2 1.2 5 1.2 Q7.8 1.2 7.8 4" fill="none" stroke="#8a8a8a" stroke-width="1.3"/><rect x="0.8" y="7" width="8.4" height="7" rx="1" fill="#8a8a8a"/></svg>
<div style="position:absolute;left:531px;top:536px;width:4px;height:17px;background:#4f4f4f;border-radius:2px"></div>
<div class="t" style="left:547px;top:539px;font-size:11px;line-height:11px;color:#c8c8c8;text-align:left;"><span class="j">レイ</span></div>
<div class="t" style="left:588px;top:539px;font-size:11px;line-height:11px;color:#c8c8c8;text-align:left;"><span class="j">パス</span></div>
<div class="t" style="left:623px;top:539px;font-size:11px;line-height:11px;color:#c8c8c8;text-align:left;"><span class="j">クイックエフェクト</span></div>
<div class="t" style="left:727px;top:539px;font-size:11px;line-height:11px;color:#c8c8c8;text-align:left;"><span class="j">スタ</span></div>
<div style="position:absolute;left:762px;top:536px;width:16px;height:16px;border:1.3px solid #8e8e8e;border-radius:3.5px;box-shadow:0 1px 0 #555;box-sizing:border-box"></div>
<svg style="position:absolute;left:765px;top:540px" width="10" height="8" viewBox="0 0 10 8"><path d="M1 1.3 L5 6.6 L9 1.3" fill="none" stroke="#ececec" stroke-width="1.5"/></svg>
<div style="position:absolute;left:531px;top:566px;width:4px;height:17px;background:#4f4f4f;border-radius:2px"></div>
<div style="position:absolute;left:541px;top:565px;width:33px;height:19px;background:#474747;border-radius:4px"></div>
<div class="t" style="left:541px;top:569px;font-size:11px;line-height:11px;color:#f4f4f4;width:33px;text-align:center;"><span class="j">変形</span></div>
<div class="t" style="left:580px;top:569px;font-size:11px;line-height:11px;color:#c8c8c8;text-align:left;"><span class="j">ナビゲータ</span></div>
<div class="t" style="left:643px;top:569px;font-size:11px;line-height:11px;color:#c8c8c8;text-align:left;"><span class="j">履歴</span></div>
<div style="position:absolute;left:762px;top:566px;width:16px;height:16px;border:1.3px solid #8e8e8e;border-radius:3.5px;box-shadow:0 1px 0 #555;box-sizing:border-box"></div>
<svg style="position:absolute;left:765px;top:570px" width="10" height="8" viewBox="0 0 10 8"><path d="M1 1.3 L5 6.6 L9 1.3" fill="none" stroke="#ececec" stroke-width="1.5"/></svg>
<div style="position:absolute;left:0px;top:609px;width:787px;height:1px;background:#121212"></div>
<div style="position:absolute;left:0px;top:610px;width:787px;height:20px;background:#383838"></div>
<div style="position:absolute;left:521px;top:610px;width:2px;height:20px;background:#141414"></div>
<svg style="position:absolute;left:10px;top:613px" width="34" height="14" viewBox="0 0 34 14"><rect x="1.5" y="2.5" width="1" height="9" fill="#6a6a6a"/><path d="M11.5 2.5 L3.8 7 L11.5 11.5 Z" fill="#5e5e5e"/><path d="M29.5 2.5 L21.8 7 L29.5 11.5 Z" fill="#5e5e5e"/></svg>
<div style="position:absolute;left:44px;top:611px;width:100px;height:17px;background:#222;border-radius:4px"></div>
<div class="t" style="left:44px;top:614px;font-size:11px;line-height:11px;color:#e0e0e0;width:100px;text-align:center;">1 / 1</div>
<svg style="position:absolute;left:145px;top:613px" width="34" height="14" viewBox="0 0 34 14"><path d="M2 1.3 L10 6.2 L2 11.2 Z" fill="#c8c8c8"/><path d="M18.5 2.5 L26.2 7 L18.5 11.5 Z" fill="#5e5e5e"/><rect x="27.5" y="2.5" width="1" height="9" fill="#6a6a6a"/></svg>
<svg style="position:absolute;left:182px;top:612px" width="74" height="16" viewBox="0 0 74 16">
<g fill="none" stroke="#5a5a5a" stroke-width="1.1"><rect x="1.9" y="0.7" width="8.3" height="10.6"/><path d="M4 3.2 L8.2 3.2 M4 5.6 L8.2 5.6 M4 8 L8.2 8 M4.2 13 L12.2 13 L12.2 3"/>
<path d="M19.5 5.5 Q19.5 3.6 22 3.6 L29 3.6 Q31.2 3.6 31.2 5.8 M22.5 9.5 Q25.5 6.8 28.5 9.5 Q25.5 12.2 22.5 9.5"/></g>
<g fill="none" stroke="#e2e2e2" stroke-width="1.3"><rect x="39.6" y="0.9" width="7.8" height="10.6" rx="0.8"/><path d="M39.8 2.6 L47.2 2.6 M42.3 13.3 L50.2 13.3 L50.2 3.2"/></g>
<g fill="none" stroke="#bdbdbd" stroke-width="1.1"><rect x="59.8" y="0.8" width="8.4" height="10.8" rx="0.8"/><path d="M62 13.2 L70.8 13.2 L70.8 3"/></g>
<g fill="#9a9a9a"><rect x="61.6" y="2.7" width="4.8" height="1.8"/><rect x="61.6" y="5.3" width="4.8" height="1.8"/><rect x="61.6" y="7.9" width="4.8" height="1.8"/></g>
</svg>
<div class="t" style="left:278px;top:614.5px;font-size:10.5px;line-height:11px;color:#bdbdbd;width:243px;overflow:hidden">'<span class="j">円</span>'<span class="j">が選択されています。</span> <b style="color:#f4f4f4"><span class="j">ドラッグ</span></b><span class="j">で選択範囲を移動</span></div>
<div style="position:absolute;left:523px;top:610px;width:264px;height:20px;background:#3a3a3a"></div>
<div class="t" style="left:529px;top:614.5px;font-size:10px;line-height:10px;color:#f0f0f0;text-align:left;font-weight:bold">&lt;<span class="j">名称未設定</span>&gt; (88.5%)</div>
<svg style="position:absolute;left:771px;top:612px" width="12" height="12" viewBox="0 0 12 12"><g stroke="#a0a0a0" stroke-width="2" stroke-linecap="round"><path d="M6 1.5 L6 6 M6 6 L10.3 4.6 M6 6 L8.6 9.8 M6 6 L3.4 9.8 M6 6 L1.7 4.6"/></g></svg>
</div></body></html>
